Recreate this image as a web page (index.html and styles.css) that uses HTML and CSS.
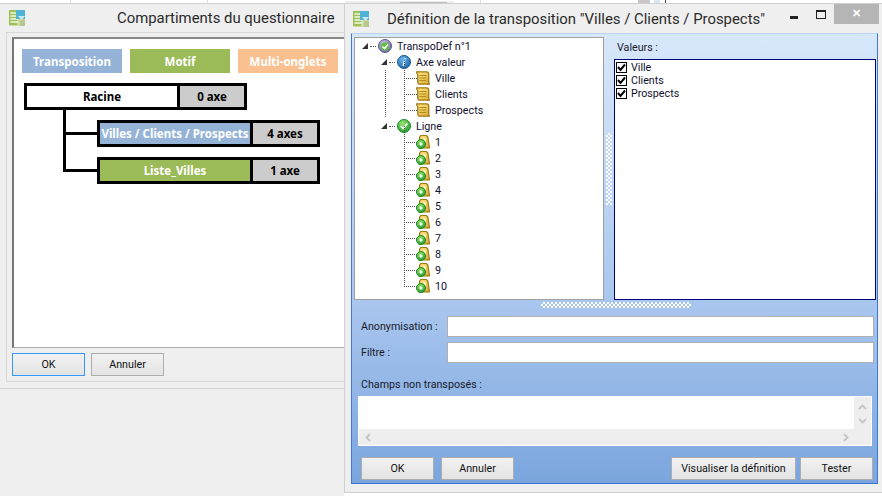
FILE: index.html
```html
<!DOCTYPE html>
<html lang="fr">
<head>
<meta charset="utf-8">
<title>Transposition</title>
<link rel="stylesheet" href="styles.css">
</head>
<body>
<svg class="defs" width="0" height="0" aria-hidden="true">
  <defs>
    <radialGradient id="gGreen" cx="40%" cy="30%" r="75%"><stop offset="0" stop-color="#9be56f"/><stop offset="1" stop-color="#1d9a2c"/></radialGradient>
    <radialGradient id="gBlue" cx="40%" cy="30%" r="75%"><stop offset="0" stop-color="#6db9ea"/><stop offset="1" stop-color="#1b63a8"/></radialGradient>
    <radialGradient id="gViolet" cx="40%" cy="30%" r="75%"><stop offset="0" stop-color="#c9c2e4"/><stop offset="1" stop-color="#6d659f"/></radialGradient>
    <linearGradient id="gGold" x1="0" y1="0" x2="1" y2="1"><stop offset="0" stop-color="#fde98c"/><stop offset="1" stop-color="#dba92a"/></linearGradient>
    <symbol id="i-app" viewBox="0 0 16 16">
      <rect x="0" y="0" width="16" height="16" rx="1" fill="#c9d9a0"/>
      <rect x="0" y="0" width="8" height="15" fill="#9fc05a"/>
      <path d="M1.500 3h6M1.500 6h7M1.500 9h8M1.500 12h8" stroke="#f2f7e4" stroke-width="1.300"/>
      <rect x="7" y="0" width="9" height="9" fill="#4fb3d6"/>
      <path d="M9 6l3.500 4 3.500-4z" fill="#cfe9f2"/>
      <rect x="11" y="10" width="5" height="6" fill="#b8c78e"/>
    </symbol>
    <symbol id="i-root" viewBox="0 0 14 14">
      <circle cx="7" cy="7" r="6.500" fill="url(#gViolet)" stroke="#5f5890"/>
      <circle cx="7" cy="7.500" r="4" fill="#5cc23e"/>
      <path d="M4.500 7.500l2 2 3.500-4" fill="none" stroke="#fff" stroke-width="1.600"/>
    </symbol>
    <symbol id="i-info" viewBox="0 0 14 14">
      <circle cx="7" cy="7" r="6.500" fill="url(#gBlue)" stroke="#155a99"/>
      <path d="M8.200 3v1.200M7.500 6l-1.300 5" fill="none" stroke="#fff" stroke-width="1.500"/>
    </symbol>
    <symbol id="i-ok" viewBox="0 0 14 14">
      <circle cx="7" cy="7" r="6.500" fill="url(#gGreen)" stroke="#1a8a2a"/>
      <path d="M3.800 7l2.300 2.500 4.200-5" fill="none" stroke="#fff" stroke-width="1.800"/>
    </symbol>
    <symbol id="i-doc" viewBox="0 0 14 14">
      <path d="M.7 .8h10q2 0 2 2v8.400l.8 2H3q-1.200-.5-1.200-2V3.500Q.5 2.500 .7 .8z" fill="url(#gGold)" stroke="#a07a14" stroke-width="1.300"/>
      <path d="M3.500 4.500h7M3.500 7h7M3.500 9.500h7" stroke="#b08a20"/>
    </symbol>
    <symbol id="i-line" viewBox="0 0 14 14">
      <path d="M3.500 3q0-2.500 2.500-2.500h3.500q2.500 0 2.500 2.500l1.500 9.800H3z" fill="url(#gGold)" stroke="#a07a14" stroke-width="1.200"/>
      <path d="M8.500 3v6" stroke="#fff6c0" stroke-width="2.500"/>
      <circle cx="5" cy="9" r="4.500" fill="url(#gGreen)" stroke="#1a8a2a"/>
      <circle cx="5" cy="9" r="1.500" fill="#fff"/>
    </symbol>
    <symbol id="i-check" viewBox="0 0 9 9">
      <path d="M1 4l2.500 3L8 1.500" fill="none" stroke="#000" stroke-width="2"/>
    </symbol>
    <symbol id="i-up" viewBox="0 0 9 6"><path d="M1 5l3.500-3.500L8 5" fill="none" stroke="#c4c4c4" stroke-width="1.800"/></symbol>
    <symbol id="i-down" viewBox="0 0 9 6"><path d="M1 1l3.500 3.500L8 1" fill="none" stroke="#c4c4c4" stroke-width="1.800"/></symbol>
    <symbol id="i-left" viewBox="0 0 6 9"><path d="M5 1L1.500 4.500 5 8" fill="none" stroke="#c4c4c4" stroke-width="1.800"/></symbol>
    <symbol id="i-right" viewBox="0 0 6 9"><path d="M1 1l3.500 3.500L1 8" fill="none" stroke="#c4c4c4" stroke-width="1.800"/></symbol>
  </defs>
</svg>

<div class="desktop">
  <section class="window window-back">
    <header class="back-title">
      <svg class="app-icon"><use href="#i-app"/></svg>
      <h1 class="title back-caption">Compartiments du questionnaire</h1>
    </header>
    <div class="back-client">
      <div class="canvas">
        <div class="legend">
          <span class="legend-item blue">Transposition</span>
          <span class="legend-item green">Motif</span>
          <span class="legend-item orange">Multi-onglets</span>
        </div>
        <div class="diagram">
          <div class="node root-node"><span class="node-name">Racine</span><span class="node-axes">0 axe</span></div>
          <div class="children">
            <div class="node child-node"><span class="node-name blue">Villes / Clients / Prospects</span><span class="node-axes">4 axes</span></div>
            <div class="node child-node"><span class="node-name green">Liste_Villes</span><span class="node-axes">1 axe</span></div>
          </div>
        </div>
      </div>
      <div class="back-actions">
        <button class="btn btn-focus">OK</button>
        <button class="btn">Annuler</button>
      </div>
    </div>
  </section>

  <section class="window window-front">
    <header class="front-title">
      <svg class="app-icon"><use href="#i-app"/></svg>
      <h1 class="title front-caption">Définition de la transposition "Villes / Clients / Prospects"</h1>
      <div class="caps">
        <span class="cap-min"></span>
        <span class="cap-max"></span>
        <span class="cap-close">✕</span>
      </div>
    </header>
    <div class="client">
      <div class="split">
        <div class="tree">
          <div class="row l0"><i class="exp"></i><svg class="ico"><use href="#i-root"/></svg><span>TranspoDef n°1</span></div>
          <div class="row l1"><i class="exp"></i><svg class="ico"><use href="#i-info"/></svg><span>Axe valeur</span></div>
          <div class="row l2"><svg class="ico"><use href="#i-doc"/></svg><span>Ville</span></div>
          <div class="row l2"><svg class="ico"><use href="#i-doc"/></svg><span>Clients</span></div>
          <div class="row l2 last-a"><svg class="ico"><use href="#i-doc"/></svg><span>Prospects</span></div>
          <div class="row l1"><i class="exp"></i><svg class="ico"><use href="#i-ok"/></svg><span>Ligne</span></div>
          <div class="row l2"><svg class="ico"><use href="#i-line"/></svg><span>1</span></div>
          <div class="row l2"><svg class="ico"><use href="#i-line"/></svg><span>2</span></div>
          <div class="row l2"><svg class="ico"><use href="#i-line"/></svg><span>3</span></div>
          <div class="row l2"><svg class="ico"><use href="#i-line"/></svg><span>4</span></div>
          <div class="row l2"><svg class="ico"><use href="#i-line"/></svg><span>5</span></div>
          <div class="row l2"><svg class="ico"><use href="#i-line"/></svg><span>6</span></div>
          <div class="row l2"><svg class="ico"><use href="#i-line"/></svg><span>7</span></div>
          <div class="row l2"><svg class="ico"><use href="#i-line"/></svg><span>8</span></div>
          <div class="row l2"><svg class="ico"><use href="#i-line"/></svg><span>9</span></div>
          <div class="row l2"><svg class="ico"><use href="#i-line"/></svg><span>10</span></div>
        </div>
        <div class="grip-v"></div>
        <div class="values">
          <div class="values-label">Valeurs :</div>
          <div class="checklist">
            <label class="check"><span class="box"><svg class="tick"><use href="#i-check"/></svg></span>Ville</label>
            <label class="check"><span class="box"><svg class="tick"><use href="#i-check"/></svg></span>Clients</label>
            <label class="check"><span class="box"><svg class="tick"><use href="#i-check"/></svg></span>Prospects</label>
          </div>
        </div>
      </div>
      <div class="grip-h"></div>
      <div class="field field-first"><span class="field-label">Anonymisation :</span><span class="input"></span></div>
      <div class="field field-second"><span class="field-label">Filtre :</span><span class="input"></span></div>
      <div class="memo-label">Champs non transposés :</div>
      <div class="memo">
        <div class="memo-top">
          <div class="memo-text"></div>
          <div class="vbar"><svg class="vchev"><use href="#i-up"/></svg><svg class="vchev"><use href="#i-down"/></svg></div>
        </div>
        <div class="hbar"><svg class="hchev"><use href="#i-left"/></svg><svg class="hchev"><use href="#i-right"/></svg></div>
      </div>
      <div class="actions">
        <button class="btn">OK</button>
        <button class="btn">Annuler</button>
        <span class="spacer"></span>
        <button class="btn btn-wide">Visualiser la définition</button>
        <button class="btn">Tester</button>
      </div>
    </div>
  </section>
</div>
</body>
</html>
```
FILE: styles.css
```css
* { box-sizing: border-box; }
html, body { margin: 0; padding: 0; }
body {
  width: 882px;
  height: 496px;
  overflow: hidden;
  background: #efefef;
  font-family: Roboto, "Noto Sans", sans-serif;
  font-size: 10.7px;
  color: #000;
}
.defs { position: absolute; }
.desktop {
  position: relative;
  width: 882px;
  height: 496px;
  overflow: hidden;
  background:
    linear-gradient(#bdbdbd, #bdbdbd) 400px 2px / 47px 1px no-repeat,
    linear-gradient(#eeeeee, #eeeeee) 345px 1px / 109px 2px no-repeat,
    linear-gradient(#dddddd, #dddddd) 70px 0 / 1px 3px no-repeat,
    linear-gradient(#dddddd, #dddddd) 207px 0 / 1px 3px no-repeat,
    linear-gradient(#dddddd, #dddddd) 480px 0 / 1px 3px no-repeat,
    linear-gradient(#c8c8c8, #c8c8c8) 638px 0 / 12px 4px no-repeat,
    linear-gradient(#dbe6f4, #dbe6f4) 654px 0 / 6px 4px no-repeat,
    linear-gradient(#444444, #444444) 665px 0 / 1px 4px no-repeat,
    #fff;
}
.window { position: absolute; background: #efefef; }
.window-back {
  left: 0;
  top: 3px;
  width: 345px;
  height: 386px;
  border-top: 1px solid #d2d2d2;
  border-bottom: 1px solid #d2d2d2;
}
.desktop::after {
  content: "";
  position: absolute;
  left: 0;
  top: 389px;
  width: 344px;
  height: 107px;
  background: #efefef;
}
.back-title {
  display: flex;
  align-items: center;
  height: 28px;
  padding-left: 9px;
}
.app-icon { width: 16px; height: 16px; flex: none; }
.title {
  margin: 0;
  font-family: Roboto, "Noto Sans", sans-serif;
  font-weight: 400;
  font-size: 14.9px;
  color: #2a2a2a;
  white-space: nowrap;
}
.back-caption { margin-left: 92px; }
.back-client {
  margin-left: 6px;
  height: 350px;
  border: 1px solid #d8d8d8;
  border-right: 0;
  padding: 4px 0 0 5px;
}
.canvas {
  height: 311px;
  background: #fff;
  border-left: 2px solid #777;
  border-top: 2px solid #888;
  border-bottom: 1px solid #aaa;
  padding: 10px 0 0 8px;
}
.legend { display: flex; gap: 8px; }
.legend-item {
  width: 100px;
  height: 24px;
  display: flex;
  align-items: center;
  justify-content: center;
  color: #fff;
  font-family: "Noto Sans", sans-serif;
  font-size: 11.5px;
  font-weight: 700;
}
.blue { background: #95b3d7; }
.green { background: #9bbb59; }
.orange { background: #fac090; }
.diagram { margin: 10px 0 0 2px; }
.node {
  display: flex;
  width: 223px;
  height: 27px;
  border: 3px solid #000;
  font-family: "Noto Sans", sans-serif;
  font-size: 11.5px;
  font-weight: 700;
}
.node-name {
  width: 150px;
  display: flex;
  align-items: center;
  justify-content: center;
  color: #fff;
  white-space: nowrap;
}
.root-node .node-name { background: #fff; color: #000; }
.node-axes {
  flex: 1;
  display: flex;
  align-items: center;
  justify-content: center;
  background: #ccc;
  border-left: 3px solid #000;
}
.children {
  position: relative;
  padding: 10px 0 0 73px;
  display: flex;
  flex-direction: column;
  gap: 10px;
}
.children::before {
  content: "";
  position: absolute;
  left: 39px;
  top: 0;
  width: 31px;
  height: 22px;
  border-left: 3px solid #000;
  border-bottom: 3px solid #000;
  box-sizing: content-box;
}
.children::after {
  content: "";
  position: absolute;
  left: 39px;
  top: 25px;
  width: 31px;
  height: 34px;
  border-left: 3px solid #000;
  border-bottom: 3px solid #000;
  box-sizing: content-box;
}
.back-actions { display: flex; gap: 6px; padding: 5px 0 0; }
.btn {
  width: 73px;
  height: 23px;
  padding: 0;
  background: linear-gradient(#f2f2f2, #e3e3e3);
  border: 1px solid #adadad;
  font: inherit;
  color: #111;
}
.btn-focus { border-color: #3399ff; }
.btn-wide { width: 125px; }

.window-front {
  left: 344px;
  top: 3px;
  width: 538px;
  height: 490px;
  border-left: 1px solid #d0d0d0;
  border-top: 1px solid #d0d0d0;
  border-bottom: 1px solid #d0d0d0;
}
.front-title {
  display: flex;
  align-items: center;
  height: 29px;
  padding-left: 8px;
}
.front-caption { margin-left: 18px; flex: 1; }
.caps { display: flex; align-items: flex-start; align-self: flex-start; height: 20px; }
.cap-min {
  width: 8px;
  height: 3px;
  margin: 12px 18px 0 0;
  background: #222;
}
.cap-max {
  width: 10px;
  height: 9px;
  margin: 6px 8px 0 0;
  border: 1px solid #222;
  border-top-width: 2px;
}
.cap-close {
  width: 45px;
  height: 20px;
  margin-right: 3px;
  background: #b5b5b5;
  color: #fff;
  font-size: 11px;
  font-weight: 700;
  text-align: center;
  line-height: 20px;
}
.client {
  margin-left: 6px;
  width: 527px;
  height: 451px;
  background: linear-gradient(#d8e8fb, #a9c6ee 60%, #7aa5de);
  border: 1px solid #3f78d3;
  border-top: 1px solid #b9d3f4;
  padding: 3px 0 0 2px;
}
.split { display: flex; height: 263px; }
.tree {
  width: 250px;
  height: 263px;
  background: #fff;
  border: 1px solid #a0a0a0;
}
.row {
  position: relative;
  display: flex;
  align-items: center;
  height: 16px;
  white-space: nowrap;
  color: #101030;
}
.row span { display: block; }
.ico { width: 14px; height: 14px; flex: none; margin-right: 5px; }
.exp {
  position: relative;
  width: 0;
  height: 0;
  flex: none;
  border-left: 6px solid transparent;
  border-bottom: 6px solid #333;
  margin-right: 10px;
  margin-left: 2px;
}
.l0 { padding-left: 5px; }
.l1 { padding-left: 24px; }
.l2 { padding-left: 61px; }
.l0::before, .l1::before {
  content: "";
  position: absolute;
  width: 6px;
  top: 8px;
  border-top: 1px dotted #555;
}
.l0::before { left: 15px; }
.l1::before { left: 34px; }
.l2::before {
  content: "";
  position: absolute;
  left: 49px;
  width: 12px;
  top: -8px;
  height: 16px;
  border-left: 1px dotted #555;
  border-bottom: 1px dotted #555;
}
.last-a::after {
  content: "";
  position: absolute;
  left: 30px;
  top: -32px;
  height: 47px;
  border-left: 1px dotted #555;
}
.grip-v {
  width: 10px;
  height: 263px;
  position: relative;
}
.grip-v::before {
  content: "";
  position: absolute;
  left: 2px;
  top: 96px;
  width: 6px;
  height: 72px;
  background: repeating-conic-gradient(#fff 0 25%, transparent 0 50%) 0 0 / 4px 4px;
}
.values { flex: 1; display: flex; flex-direction: column; }
.values-label { height: 22px; padding: 3px 0 0 3px; line-height: 15px; color: #1a1a2a; }
.checklist {
  width: 262px;
  flex: 1;
  background: #fff;
  border: 1px solid #000080;
  padding-top: 1px;
}
.check { display: flex; align-items: center; height: 13px; color: #101030; }
.box {
  width: 11px;
  height: 11px;
  margin: 0 4px 0 1px;
  border: 1px solid #000;
  display: flex;
  align-items: center;
  justify-content: center;
}
.tick { width: 9px; height: 9px; }
.grip-h {
  position: relative;
  height: 16px;
}
.grip-h::before {
  content: "";
  position: absolute;
  left: 187px;
  top: 2px;
  width: 150px;
  height: 6px;
  background: repeating-conic-gradient(#fff 0 25%, transparent 0 50%) 0 0 / 4px 4px;
}
.field { display: flex; align-items: center; height: 21px; padding-left: 7px; color: #1a1a2a; }
.field-second { margin-top: 5px; }
.field-label { width: 86px; flex: none; }
.input {
  width: 427px;
  height: 21px;
  background: #fff;
  border: 1px solid #b0b0b0;
}
.memo-label { margin: 14px 0 0 7px; height: 19px; line-height: 16px; color: #1a1a2a; }
.memo {
  margin-left: 4px;
  width: 514px;
  height: 50px;
  background: #eee;
  border: 1px solid #fff;
}
.memo-top { display: flex; height: 32px; }
.memo-text { flex: 1; background: #fff; }
.vbar {
  width: 17px;
  display: flex;
  flex-direction: column;
  align-items: center;
  gap: 8px;
  padding-top: 7px;
}
.vchev { width: 9px; height: 6px; }
.hbar {
  display: flex;
  justify-content: space-between;
  align-items: center;
  padding: 0 22px 0 6px;
  height: 16px;
}
.hchev { width: 6px; height: 9px; }
.actions { display: flex; gap: 7px; padding: 11px 0 0 7px; width: 519px; }
.actions .btn-wide { margin-right: -3px; }
.spacer { flex: 1; }
```
